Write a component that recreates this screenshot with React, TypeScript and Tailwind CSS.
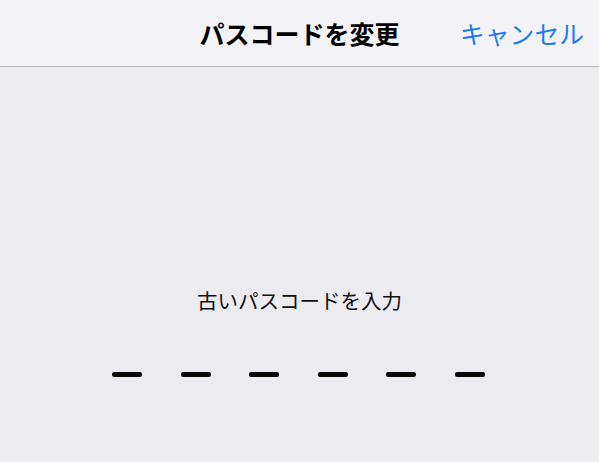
export default function App() {
  const font = { fontFamily: '"Noto Sans CJK JP", "Noto Sans", sans-serif' };
  return (
    <div className="w-[599px] h-[462px] bg-[#ebebf0] flex flex-col overflow-hidden" style={font}>
      <div className="h-[66px] bg-[#f3f3f7] grid grid-cols-[1fr_auto_1fr] items-center border-b border-[#b3b3b8] box-content">
        <div />
        <div className="text-[25px] font-bold text-black leading-none">パスコードを変更</div>
        <div className="flex justify-end pr-[15px]">
          <span className="text-[24.8px] text-[#1b7bf2] leading-none">キャンセル</span>
        </div>
      </div>
      <div className="flex flex-col items-center pt-[221px]">
        <div className="text-[20.5px] leading-[24px] text-[#111]">古いパスコードを入力</div>
        <div className="mt-[60px] flex gap-[38.6px] pr-[2px]">
          {[0, 1, 2, 3, 4, 5].map((i) => (
            <div key={i} className="w-[30px] h-[5px] rounded-[2px] bg-[#0a0a0a]" />
          ))}
        </div>
      </div>
    </div>
  );
}
